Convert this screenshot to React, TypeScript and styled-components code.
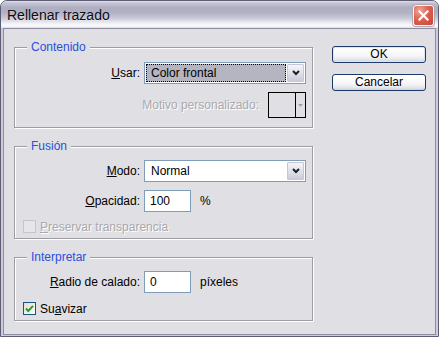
import React from "react";
import styled, { createGlobalStyle } from "styled-components";

const GlobalStyle = createGlobalStyle`
  html, body { margin: 0; padding: 0; background: #ffffff; }
  body { font-family: "Liberation Sans", Arial, sans-serif; font-size: 12px; color: #000; }
  * { box-sizing: border-box; }
`;

const Window = styled.div`
  width: 439px;
  height: 337px;
  border: 1px solid #5c5c76;
  border-radius: 7px 7px 0 0;
  background: #cdcdda;
  display: flex;
  flex-direction: column;
  overflow: hidden;
`;

const TitleBar = styled.div`
  height: 27px;
  flex: none;
  display: flex;
  align-items: flex-start;
  padding: 0 4px 0 6px;
  background: linear-gradient(
    to bottom,
    #e2e2ea 0px,
    #c4c4d2 2px,
    #aeaec2 7px,
    #b2b2c4 12px,
    #c8c8d6 17px,
    #e6e6ee 21px,
    #fafafc 24px,
    #f2f2f6 26px,
    #d4d4de 27px
  );
`;

const TitleText = styled.span`
  font-family: "Liberation Sans", Arial, sans-serif;
  font-size: 14px;
  line-height: 28px;
  color: #0c0c14;
  text-shadow: 0 1px 0 rgba(255, 255, 255, 0.35);
`;

const CloseBtn = styled.div`
  width: 21px;
  height: 21px;
  margin-top: 4px;
  margin-left: auto;
  border: 1px solid #fbf4f4;
  border-radius: 3px;
  box-shadow: 0 0 0 1px #b4a8b4;
  background: radial-gradient(circle at 30% 25%, #f1a79a 0%, #dc6252 45%, #c6453b 100%);
  display: flex;
  align-items: center;
  justify-content: center;
`;

const Body = styled.div`
  flex: 1;
  margin: 0 2px 1px 2px;
  border: 1px solid #8c8ca2;
  background: #e0dfe3;
  display: flex;
  gap: 19px;
  padding: 18px 8px 0 10px;
`;

const LeftCol = styled.div`
  width: 299px;
  display: flex;
  flex-direction: column;
  gap: 18px;
`;

const RightCol = styled.div`
  width: 94px;
  display: flex;
  flex-direction: column;
  gap: 11px;
  margin-top: -1px;
`;

const Group = styled.div<{ $pt: number; $pb: number }>`
  position: relative;
  border: 1px solid #9d9ca2;
  box-shadow: inset 1px 1px 0 #ffffff, 1px 1px 0 #ffffff;
  padding: ${(p) => p.$pt}px 6px ${(p) => p.$pb}px 0;
  display: flex;
  flex-direction: column;
`;

const Legend = styled.span`
  position: absolute;
  top: -8px;
  left: 12px;
  padding: 0 4px;
  background: #e0dfe3;
  color: #2a50dd;
  line-height: 14px;
`;

const Row = styled.div<{ $mt?: number; $end?: boolean }>`
  display: flex;
  align-items: center;
  margin-top: ${(p) => p.$mt ?? 0}px;
  justify-content: ${(p) => (p.$end ? "flex-end" : "flex-start")};
`;

const Label = styled.span`
  width: 125px;
  flex: none;
  text-align: right;
  margin-right: 4px;
`;

const DisabledText = styled.span<{ $mr?: number }>`
  color: #a9a8ad;
  text-shadow: 1px 1px 0 #ffffff;
  margin-right: ${(p) => p.$mr ?? 0}px;
`;

const Key = styled.span`
  text-decoration: underline;
`;

const Select = styled.div`
  width: 162px;
  height: 22px;
  border: 1px solid #7f9db9;
  background: #ffffff;
  padding: 1px;
  display: flex;
`;

const SelectValue = styled.div<{ $focused?: boolean }>`
  flex: 1;
  display: flex;
  align-items: center;
  padding-left: 4px;
  margin-right: 1px;
  background: ${(p) => (p.$focused ? "#b4b5c1" : "transparent")};
  border: 1px ${(p) => (p.$focused ? "dotted #000" : "solid transparent")};
`;

const DropBtn = styled.div`
  width: 17px;
  border: 1px solid #c6c6d4;
  border-radius: 1px;
  background: linear-gradient(to bottom, #f4f4f9 0%, #e2e2ec 50%, #cbcbd9 100%);
  display: flex;
  align-items: center;
  justify-content: center;
`;

const Swatch = styled.div`
  width: 38px;
  height: 26px;
  border: 1px solid #000;
  display: flex;
`;

const SwatchFill = styled.div`
  flex: 1;
`;

const SwatchArrow = styled.div`
  width: 10px;
  border-left: 1px solid #000;
  display: flex;
  align-items: center;
  justify-content: center;
`;

const TextBox = styled.div`
  width: 47px;
  height: 22px;
  border: 1px solid #7f9db9;
  background: #ffffff;
  padding-left: 5px;
  display: flex;
  align-items: center;
`;

const Unit = styled.span`
  margin-left: 9px;
`;

const CheckRow = styled.div<{ $mt: number }>`
  display: flex;
  align-items: center;
  gap: 4px;
  padding-left: 8px;
  height: 13px;
  margin-top: ${(p) => p.$mt}px;
`;

const CheckBox = styled.div<{ $disabled?: boolean }>`
  width: 13px;
  height: 13px;
  flex: none;
  border: 1px solid ${(p) => (p.$disabled ? "#c6c5cb" : "#1c5180")};
  background: ${(p) =>
    p.$disabled ? "#e6e5e9" : "linear-gradient(135deg, #dcdcd7 0%, #ffffff 100%)"};
  display: flex;
  align-items: center;
  justify-content: center;
`;

const Button = styled.button<{ $default?: boolean }>`
  width: 94px;
  height: 17px;
  padding: 0;
  border: 1px solid #1b3a6a;
  border-radius: 3px;
  background: linear-gradient(to bottom, #ffffff 0%, #f6f6f8 60%, #e4e4ea 85%, #cfcfd8 100%);
  box-shadow: ${(p) => (p.$default ? "inset 0 0 0 1px #dfe4f4" : "none")};
  font-family: "Liberation Sans", Arial, sans-serif;
  font-size: 12px;
  color: #000;
  line-height: 15px;
`;

const Chevron = () => (
  <svg width="8" height="6" viewBox="0 0 8 6">
    <polyline points="1,1 4,4 7,1" fill="none" stroke="#1e1e28" strokeWidth="2" />
  </svg>
);

export default function App() {
  return (
    <>
      <GlobalStyle />
      <Window>
        <TitleBar>
          <TitleText>Rellenar trazado</TitleText>
          <CloseBtn>
            <svg width="11" height="11" viewBox="0 0 11 11">
              <path d="M1.5 1.5 L9.5 9.5 M9.5 1.5 L1.5 9.5" stroke="#ffffff" strokeWidth="2.2" strokeLinecap="square" />
            </svg>
          </CloseBtn>
        </TitleBar>
        <Body>
          <LeftCol>
            <Group $pt={14} $pb={9}>
              <Legend>Contenido</Legend>
              <Row>
                <Label>
                  <Key>U</Key>sar:
                </Label>
                <Select>
                  <SelectValue $focused>Color frontal</SelectValue>
                  <DropBtn>
                    <Chevron />
                  </DropBtn>
                </Select>
              </Row>
              <Row $mt={8} $end>
                <DisabledText $mr={9}>Motivo personalizado:</DisabledText>
                <Swatch>
                  <SwatchFill />
                  <SwatchArrow>
                    <svg width="5" height="3" viewBox="0 0 5 3">
                      <polygon points="0,0 5,0 2.5,3" fill="#a0a0a8" />
                    </svg>
                  </SwatchArrow>
                </Swatch>
              </Row>
            </Group>

            <Group $pt={13} $pb={5}>
              <Legend>Fusión</Legend>
              <Row>
                <Label>
                  <Key>M</Key>odo:
                </Label>
                <Select>
                  <SelectValue>Normal</SelectValue>
                  <DropBtn>
                    <Chevron />
                  </DropBtn>
                </Select>
              </Row>
              <Row $mt={8}>
                <Label>
                  <Key>O</Key>pacidad:
                </Label>
                <TextBox>100</TextBox>
                <Unit>%</Unit>
              </Row>
              <CheckRow $mt={8}>
                <CheckBox $disabled />
                <DisabledText>
                  <Key>P</Key>reservar transparencia
                </DisabledText>
              </CheckRow>
            </Group>

            <Group $pt={13} $pb={5}>
              <Legend>Interpretar</Legend>
              <Row>
                <Label>
                  <Key>R</Key>adio de calado:
                </Label>
                <TextBox>0</TextBox>
                <Unit>píxeles</Unit>
              </Row>
              <CheckRow $mt={9}>
                <CheckBox>
                  <svg width="9" height="9" viewBox="0 0 9 9">
                    <polyline points="1,4.5 3.3,7 8,1.8" fill="none" stroke="#21a121" strokeWidth="2" />
                  </svg>
                </CheckBox>
                <span>
                  Su<Key>a</Key>vizar
                </span>
              </CheckRow>
            </Group>
          </LeftCol>
          <RightCol>
            <Button $default>OK</Button>
            <Button>Cancelar</Button>
          </RightCol>
        </Body>
      </Window>
    </>
  );
}
